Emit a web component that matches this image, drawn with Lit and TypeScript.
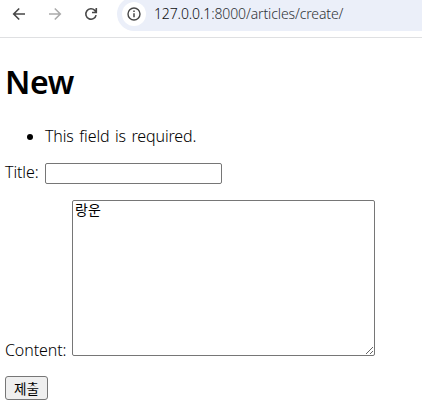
import { LitElement, html, css } from "lit";
import { customElement } from "lit/decorators.js";

@customElement("browser-bar")
class BrowserBar extends LitElement {
  static styles = css`
    :host { display: flex; height: 37px; border-bottom: 1px solid #dfe0e2; background: #fff; overflow: hidden; font-family: "Noto Sans", "Open Sans", sans-serif; }
    .nav { display: flex; gap: 20px; width: 105px; padding: 6px 0 0 11px; box-sizing: border-box; }
    .nav svg { width: 16px; height: 16px; flex: none; }
    svg { display: block; fill: none; stroke: #474747; stroke-width: 1.6; }
    .off { stroke: #ababab; }
    .address { display: flex; align-items: center; flex: 1; height: 34px; margin: -3px 0 0 12px; padding-left: 5px; border-radius: 17px 0 0 17px; background: #ebeff9; box-sizing: border-box; }
    .info { display: grid; place-items: center; width: 24px; height: 24px; border-radius: 50%; background: #fff; }
    .url { margin-left: 8px; font-size: 14px; line-height: 20px; font-weight: 300; letter-spacing: -0.12px; color: #303337; white-space: nowrap; }
    .host { color: #0c0e10; }
  `;
  render() {
    return html`
      <div class="nav">
        <svg viewBox="0 0 16 16"><path d="M14 8H3M8.2 2.5 2.7 8l5.5 5.5" /></svg>
        <svg class="off" viewBox="0 0 16 16"><path d="M2 8h11M7.8 2.5 13.3 8l-5.5 5.5" /></svg>
        <svg viewBox="0 0 16 16"><path d="M13.1 9.1A5.2 5.2 0 1 1 11.8 4.4L13.2 6M13.3 2v4.5H9" /></svg>
      </div>
      <div class="address">
        <span class="info">
          <svg width="14" height="14" viewBox="0 0 14 14"><circle cx="7" cy="7" r="6" stroke-width="1.4" /><path d="M7 6.2v4M7 3.6v1.5" stroke-width="1.5" /></svg>
        </span>
        <span class="url"><span class="host">127.0.0.1</span>:8000/articles/create/</span>
      </div>
    `;
  }
}

@customElement("app-root")
class AppRoot extends LitElement {
  static styles = css`
    :host { display: block; height: 420px; overflow: hidden; background: #fff; color: #000; font: 300 16px/22px "Noto Sans", "Open Sans", "Noto Sans CJK KR", sans-serif; }
    main { padding: 22px 5px 0; }
    h1 { margin: 0; font-size: 32px; line-height: 44px; font-weight: 600; letter-spacing: -0.4px; }
    ul { margin: 21px 0 0; padding-left: 40px; }
    li { letter-spacing: -0.13px; word-spacing: 1.5px; }
    .row { display: flex; }
    .title { margin-top: 16px; align-items: flex-start; height: 21px; }
    .content { margin-top: 16px; align-items: flex-end; height: 156px; }
    label { flex: none; letter-spacing: -0.1px; }
    .title label { width: 40px; margin-top: -2px; }
    .content label { width: 67px; margin-bottom: -5px; }
    input, textarea { box-sizing: border-box; margin: 0; border: 1px solid #767676; border-radius: 2px; background: #fff; color: #000; outline: none; }
    input { width: 177px; height: 21px; }
    textarea { width: 303px; height: 156px; padding: 0 2px; font: 400 14px/16px "Noto Sans CJK KR", sans-serif; resize: both; }
    button { display: block; box-sizing: border-box; width: 43px; height: 24px; margin: 20px 0 0; padding: 0; border: 1px solid #767676; border-radius: 3px; background: #efefef; color: #000; font: 13.6px/22px "Noto Sans CJK KR", sans-serif; }
  `;
  render() {
    return html`
      <browser-bar></browser-bar>
      <main>
        <h1>New</h1>
        <ul><li>This field is required.</li></ul>
        <div class="row title"><label for="title">Title:</label><input id="title" type="text" /></div>
        <div class="row content"><label for="content">Content:</label><textarea id="content" spellcheck="false" .value=${"랑운"}></textarea></div>
        <button type="submit">제출</button>
      </main>
    `;
  }
}
